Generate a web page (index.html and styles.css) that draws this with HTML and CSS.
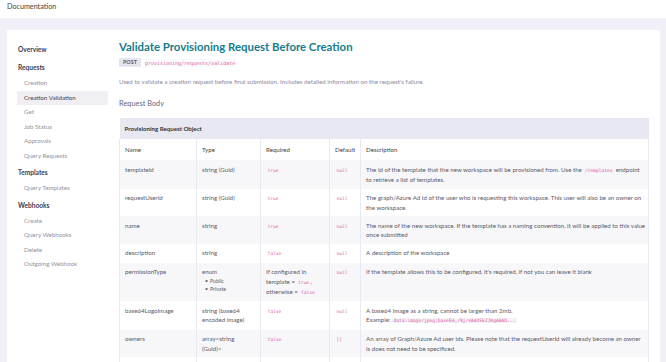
FILE: index.html
```html
<!DOCTYPE html>
<html lang="en">
<head>
    <meta charset="UTF-8">
    <title>Documentation</title>
    <link rel="stylesheet" href="styles.css">
</head>
<body>
    <div class="topbar">Documentation</div>

    <div class="page">
        <div class="card">
            <!-- Sidebar -->
            <div class="sidebar">
                <div class="nav-title">Overview</div>
                <div class="nav-title">Requests</div>
                <div class="nav-item">Creation</div>
                <div class="nav-item active">Creation Validation</div>
                <div class="nav-item">Get</div>
                <div class="nav-item">Job Status</div>
                <div class="nav-item">Approvals</div>
                <div class="nav-item">Query Requests</div>
                <div class="nav-title">Templates</div>
                <div class="nav-item">Query Templates</div>
                <div class="nav-title">Webhooks</div>
                <div class="nav-item">Create</div>
                <div class="nav-item">Query Webhooks</div>
                <div class="nav-item">Delete</div>
                <div class="nav-item">Outgoing Webhook</div>
            </div>

            <!-- Content -->
            <div class="content">
                <h1>Validate Provisioning Request Before Creation</h1>
                <div class="endpoint">
                    <span class="method">POST</span>
                    <code class="path">provisioning/requests/validate</code>
                </div>
                <p class="intro">Used to validate a creation request before final submission. Includes detailed information on the request's failure.</p>

                <h2>Request Body</h2>

                <table class="params">
                    <thead>
                        <tr class="caption-row"><th colspan="5">Provisioning Request Object</th></tr>
                        <tr class="head-row">
                            <th class="c-name">Name</th>
                            <th class="c-type">Type</th>
                            <th class="c-req">Required</th>
                            <th class="c-def">Default</th>
                            <th>Description</th>
                        </tr>
                    </thead>
                    <tbody>
                        <tr>
                            <td>templateId</td>
                            <td>string (Guid)</td>
                            <td><code>true</code></td>
                            <td><code>null</code></td>
                            <td class="desc">The Id of the template that the new workspace will be provisioned from. Use the <code class="bg">/templates</code> endpoint to retrieve a list of templates.</td>
                        </tr>
                        <tr>
                            <td>requestUserId</td>
                            <td>string (Guid)</td>
                            <td><code>true</code></td>
                            <td><code>null</code></td>
                            <td class="desc">The graph/Azure Ad Id of the user who is requesting this workspace. This user will also be an owner on the workspace.</td>
                        </tr>
                        <tr>
                            <td>name</td>
                            <td>string</td>
                            <td><code>true</code></td>
                            <td><code>null</code></td>
                            <td class="desc">The name of the new workspace. If the template has a naming convention, it will be applied to this value once submitted</td>
                        </tr>
                        <tr>
                            <td>description</td>
                            <td>string</td>
                            <td><code>false</code></td>
                            <td><code>null</code></td>
                            <td class="desc">A description of the workspace</td>
                        </tr>
                        <tr>
                            <td>permissionType</td>
                            <td>enum
                                <ul class="enum">
                                    <li>Public</li>
                                    <li>Private</li>
                                </ul>
                            </td>
                            <td>If configured in template = <code>true</code>, otherwise = <code>false</code></td>
                            <td><code>null</code></td>
                            <td class="desc">If the template allows this to be configured, it's required, if not you can leave it blank</td>
                        </tr>
                        <tr>
                            <td>base64LogoImage</td>
                            <td>string (base64 encoded image)</td>
                            <td><code>false</code></td>
                            <td><code>null</code></td>
                            <td class="desc">A base64 image as a string, cannot be larger than 2mb.<br>Example: <code class="bg">data:image/jpeg;base64,/9j/4AAQSkZJRgABAQ...</code></td>
                        </tr>
                        <tr>
                            <td>owners</td>
                            <td>array&lt;string<br>(Guid)&gt;</td>
                            <td><code>false</code></td>
                            <td><code>[]</code></td>
                            <td class="desc">An array of Graph/Azure Ad user ids. Please note that the requestUserId will already become an owner is does not need to be specificed.</td>
                        </tr>
                        <tr>
                            <td>members</td>
                            <td>array&lt;string<br>(Guid)&gt;</td>
                            <td><code>false</code></td>
                            <td><code>[]</code></td>
                            <td class="desc">An array of Graph/Azure Ad user ids.</td>
                        </tr>
                    </tbody>
                </table>
            </div>
        </div>
    </div>
</body>
</html>
```

FILE: styles.css
```css
body {
    font-family: 'Lato', 'Liberation Sans', sans-serif;
    background-color: #f0f0f6;
    margin: 0;
    padding: 0;
    color: #555;
    overflow: hidden;
}
.topbar {
    background-color: #ffffff;
    height: 18px;
    line-height: 14px;
    padding-left: 7px;
    font-size: 7.2px;
    color: #444;
}
.page {
    padding: 12px 6px 0 7px;
}
.card {
    background-color: #ffffff;
    display: flex;
    padding: 10px 11px 0 10px;
    min-height: 400px;
}

/* Sidebar */
.sidebar {
    width: 91px;
    flex-shrink: 0;
    margin-right: 11px;
}
.nav-title {
    line-height: 18px;
    padding-left: 1px;
    font-size: 6.6px;
    font-weight: bold;
    color: #3d3d4d;
}
.nav-item {
    line-height: 14.5px;
    padding-left: 7px;
    font-size: 6.2px;
    color: #92929e;
}
.nav-item.active {
    background-color: #efeff4;
    color: #3d3d4d;
}

/* Content */
.content {
    flex: 1;
}
h1 {
    margin: 0;
    font-size: 11.4px;
    line-height: 14px;
    color: #1a7d8a;
    font-weight: bold;
}
.endpoint {
    margin-top: 4px;
    height: 9px;
    display: flex;
    align-items: center;
}
.method {
    background-color: #e5e5ef;
    color: #5a5a6e;
    font-size: 5.4px;
    font-weight: bold;
    line-height: 9px;
    padding: 0 4px;
    border-radius: 1px;
}
.path {
    margin-left: 3px;
    font-family: 'DejaVu Sans Mono', 'Liberation Mono', monospace;
    font-size: 5px;
    color: #e05a9e;
    background-color: #fafafc;
    line-height: 8px;
    padding: 0 1px;
}
.intro {
    margin: 10px 0 0;
    font-size: 6.2px;
    line-height: 10px;
    color: #8a8aa2;
}
h2 {
    margin: 12px 0 0;
    font-size: 7.4px;
    line-height: 10px;
    font-weight: normal;
    color: #66667f;
}
.params {
    margin-top: 9px;
    width: 530px;
    border-collapse: collapse;
    font-size: 6.15px;
    line-height: 9.2px;
}
.params th,
.params td {
    text-align: left;
    vertical-align: top;
    padding: 4.5px 5px;
    border-left: 1px solid #e9e9f0;
    border-right: 1px solid #e9e9f0;
}
.params td.desc {
    padding-right: 2px;
}
.caption-row th {
    background-color: #e8e8f2;
    color: #333;
    font-weight: bold;
    padding: 6px 5px;
    border: none;
}
.head-row th {
    font-weight: normal;
    color: #444;
    padding: 6px 5px;
}
.c-name { width: 66px; }
.c-type { width: 53px; }
.c-req { width: 58px; }
.c-def { width: 19px; }
.params tbody tr:nth-child(odd) {
    background-color: #f7f7fa;
}
.params td {
    color: #5a5a66;
}
.params code {
    font-family: 'DejaVu Sans Mono', 'Liberation Mono', monospace;
    font-size: 4.6px;
    color: #e05a9e;
    padding: 0 1.5px;
}
.params code.bg {
    background-color: #f4f4f8;
}
.enum {
    margin: 0;
    padding-left: 3px;
    list-style: none;
    font-size: 5.2px;
    line-height: 8.5px;
}
.enum li::before {
    content: "\2022";
    margin-right: 2px;
}
```
